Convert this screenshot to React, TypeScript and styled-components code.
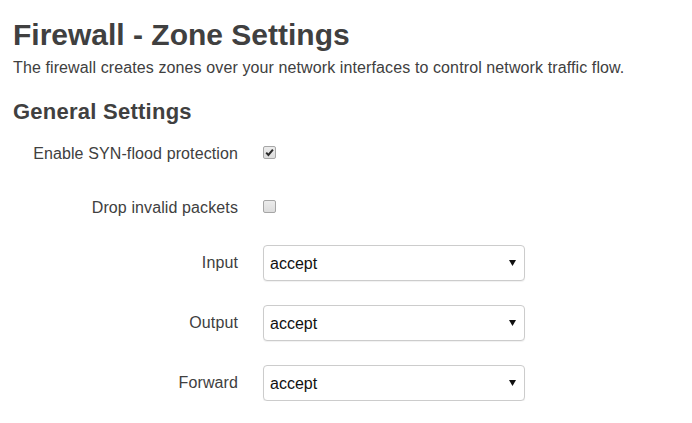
import React, { useState } from "react";
import styled, { createGlobalStyle } from "styled-components";

const GlobalStyle = createGlobalStyle`
  html, body {
    margin: 0;
    padding: 0;
    background: #ffffff;
  }
  body {
    font-family: "Liberation Sans", Arial, sans-serif;
    color: #404040;
  }
`;

const Page = styled.div`
  padding: 18px 13px 0 13px;
`;

const Title = styled.h2`
  margin: 0;
  font-size: 30px;
  line-height: 33px;
  font-weight: bold;
  color: #404040;
`;

const Description = styled.p`
  margin: 7px 0 0 0;
  font-size: 16px;
  line-height: 20px;
  letter-spacing: 0.11px;
  color: #404040;
`;

const SectionTitle = styled.h3`
  margin: 22px 0 0 0;
  font-size: 22px;
  line-height: 24px;
  font-weight: bold;
  letter-spacing: 0.25px;
  color: #404040;
`;

const Form = styled.div`
  margin-top: 12px;
  display: flex;
  flex-direction: column;
`;

const Row = styled.div<{ $space: number }>`
  display: grid;
  grid-template-columns: 225px 1fr;
  column-gap: 25px;
  align-items: center;
  height: 36px;
  margin-bottom: ${(p) => p.$space}px;
`;

const Label = styled.label`
  text-align: right;
  font-size: 16px;
  line-height: 20px;
  letter-spacing: 0.11px;
  color: #404040;
  white-space: nowrap;
`;

const CheckBox = styled.span<{ $checked: boolean }>`
  position: relative;
  display: inline-block;
  width: 11px;
  height: 11px;
  border: 1px solid #a6a6a6;
  border-radius: 2px;
  background: linear-gradient(#ececec, #dcdcdc);
  cursor: pointer;
`;

const CheckMark = styled.svg`
  position: absolute;
  left: 0;
  top: 0;
`;

const SelectWrap = styled.div`
  position: relative;
  width: 262px;
  height: 36px;
`;

const Select = styled.select`
  appearance: none;
  -webkit-appearance: none;
  box-sizing: border-box;
  width: 100%;
  height: 100%;
  padding: 0 24px 0 6px;
  border: 1px solid #cccccc;
  border-radius: 4px;
  background: #ffffff;
  box-shadow: 0 1px 1px rgba(0, 0, 0, 0.06);
  font-family: "Liberation Sans", Arial, sans-serif;
  font-size: 16px;
  color: #111111;
  outline: none;
`;

const Arrow = styled.svg`
  position: absolute;
  right: 9px;
  top: 15px;
  pointer-events: none;
`;

const Check: React.FC<{ checked: boolean; onToggle: () => void }> = ({
  checked,
  onToggle,
}) => (
  <div>
    <CheckBox $checked={checked} onClick={onToggle}>
      {checked && (
        <CheckMark width="11" height="11" viewBox="0 0 11 11">
          <path
            d="M2.2 5.6 L4.4 7.9 L8.9 2.6"
            fill="none"
            stroke="#2b2b2b"
            strokeWidth="2"
          />
        </CheckMark>
      )}
    </CheckBox>
  </div>
);

const PolicySelect: React.FC<{ value: string; onChange: (v: string) => void }> = ({
  value,
  onChange,
}) => (
  <SelectWrap>
    <Select value={value} onChange={(e) => onChange(e.target.value)}>
      <option value="accept">accept</option>
      <option value="reject">reject</option>
      <option value="drop">drop</option>
    </Select>
    <Arrow width="7" height="6" viewBox="0 0 7 6">
      <path d="M0 0 L7 0 L3.5 6 Z" fill="#111" />
    </Arrow>
  </SelectWrap>
);

export default function App() {
  const [synFlood, setSynFlood] = useState(true);
  const [dropInvalid, setDropInvalid] = useState(false);
  const [policy, setPolicy] = useState({
    input: "accept",
    output: "accept",
    forward: "accept",
  });

  return (
    <>
      <GlobalStyle />
      <Page>
        <Title>Firewall - Zone Settings</Title>
        <Description>
          The firewall creates zones over your network interfaces to control
          network traffic flow.
        </Description>
        <SectionTitle>General Settings</SectionTitle>
        <Form>
          <Row $space={18}>
            <Label>Enable SYN-flood protection</Label>
            <Check checked={synFlood} onToggle={() => setSynFlood(!synFlood)} />
          </Row>
          <Row $space={19}>
            <Label>Drop invalid packets</Label>
            <Check
              checked={dropInvalid}
              onToggle={() => setDropInvalid(!dropInvalid)}
            />
          </Row>
          <Row $space={24}>
            <Label>Input</Label>
            <PolicySelect
              value={policy.input}
              onChange={(v) => setPolicy({ ...policy, input: v })}
            />
          </Row>
          <Row $space={24}>
            <Label>Output</Label>
            <PolicySelect
              value={policy.output}
              onChange={(v) => setPolicy({ ...policy, output: v })}
            />
          </Row>
          <Row $space={0}>
            <Label>Forward</Label>
            <PolicySelect
              value={policy.forward}
              onChange={(v) => setPolicy({ ...policy, forward: v })}
            />
          </Row>
        </Form>
      </Page>
    </>
  );
}
